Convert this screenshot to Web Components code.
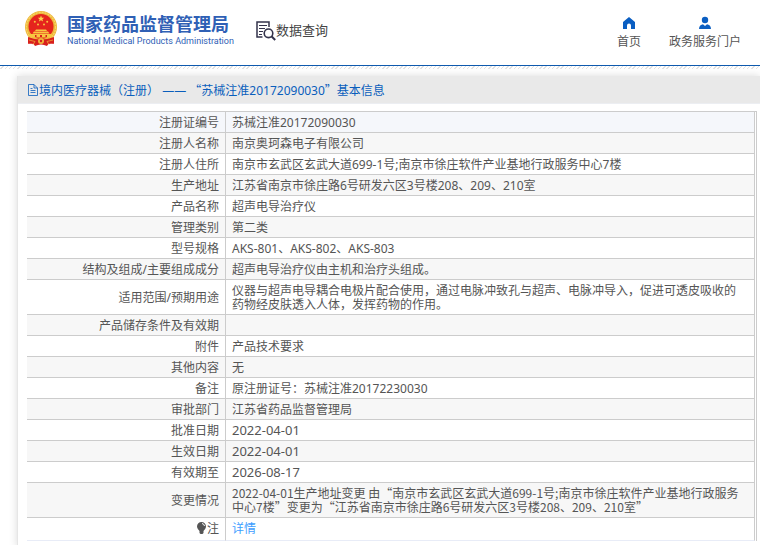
<!DOCTYPE html>
<html lang="zh-CN">
<head>
<meta charset="utf-8">
<title>数据查询</title>
<style>
  body {
    margin: 0;
    background: #fff;
    color: #555;
    font: 12px/14px "Noto Sans", "Noto Sans CJK SC", sans-serif;
  }
</style>
</head>
<body>
<data-page></data-page>

<script>
  function define(name, markup, setup) {
    const template = document.createElement('template');
    template.innerHTML = markup;
    customElements.define(name, class extends HTMLElement {
      constructor() {
        super();
        this.attachShadow({ mode: 'open' }).append(template.content.cloneNode(true));
        if (setup) setup(this.shadowRoot);
      }
    });
  }

  define('state-emblem', `
    <style>
      :host { display: block; width: 34px; }
      svg { display: block; width: 100%; }
    </style>
    <svg viewBox="0 0 34 36" aria-hidden="true">
      <path d="M6 26 L4 33 L9 32 L11 35 L17 33 L23 35 L25 32 L30 33 L28 26Z" fill="#d8201c"/>
      <circle cx="17" cy="16" r="16" fill="#edb73c"/>
      <circle cx="17" cy="16" r="14.600" fill="none" stroke="#f8d566" stroke-width="1.200" stroke-dasharray="2 1"/>
      <circle cx="17" cy="15.500" r="12.500" fill="#e5241d"/>
      <path d="M17 4.500l.9 2.200 2.400.1-1.900 1.500.7 2.300-2.100-1.300-2.100 1.300.7-2.300-1.900-1.500 2.400-.1z" fill="#fbd34c"/>
      <g fill="#f8c640">
        <circle cx="10.800" cy="10.800" r="1"/><circle cx="14" cy="13.500" r="1"/>
        <circle cx="20" cy="13.500" r="1"/><circle cx="23.200" cy="10.800" r="1"/>
        <path d="M12 18.500h10l1 1.500H11zM10 20.500h14l1.500 2h-17zM6 23h22v3.500H6z"/>
      </g>
      <path d="M16 24h2v2h-2zM11 24h1.500v2H11zM21.500 24H23v2h-1.500z" fill="#d8201c"/>
      <path d="M4 26q13 5 26 0v6q-13 3-26 0z" fill="#d8201c"/>
      <circle cx="17" cy="30" r="3" fill="#edb73c"/><circle cx="17" cy="30" r="1.200" fill="#d8201c"/>
      <path d="M5 29l6 1.500-2 3M29 29l-6 1.500 2 3" fill="none" stroke="#f3b63a" stroke-width=".7"/>
    </svg>`);

  define('brand-logo', `
    <style>
      :host { display: flex; align-items: center; gap: 9px; color: #2f60b5; }
      .text { padding-top: 4px; }
      .name { display: block; font-size: 18px; line-height: 20px; font-weight: 700; }
      .english { display: block; font: 9px/14px Roboto, sans-serif; }
    </style>
    <state-emblem></state-emblem>
    <div class="text">
      <span class="name"><slot></slot></span>
      <span class="english"><slot name="english"></slot></span>
    </div>`);

  define('query-title', `
    <style>
      :host { display: flex; align-items: center; color: #444; }
      svg { width: 20px; height: 20px; }
      span { font-size: 13px; line-height: 18px; padding-bottom: 2px; }
    </style>
    <svg viewBox="0 0 20 20" fill="none" stroke="#33334b" aria-hidden="true">
      <path d="M6.500 16H1V1h12v5" stroke-width="1.500"/>
      <path d="M3 4.500h8M3 7.500h6M3 10.500h4M3 13.500h3" stroke-width="1"/>
      <circle cx="12.500" cy="12.300" r="4.300" stroke-width="1.600"/>
      <path d="M15.700 15.500l3.500 3.500" stroke-width="2"/>
    </svg>
    <span><slot></slot></span>`);

  define('nav-item', `
    <style>
      :host { display: block; }
      a { display: flex; flex-direction: column; align-items: center; gap: 5px; color: #555; text-decoration: none; }
      ::slotted(svg) { display: block; width: 14px; height: 14px; fill: #0a5ec2; }
    </style>
    <a href="#"><slot name="icon"></slot><span><slot></slot></span></a>`);

  define('site-header', `
    <style>
      :host { display: block; }
      header { display: flex; align-items: center; height: 65px; padding: 0 19px 0 24px; border-bottom: 1px solid #0f5aae; }
      brand-logo { margin-top: -8px; }
      query-title { margin: -4px 0 0 22px; }
      nav { display: flex; gap: 28px; margin-left: auto; }
      .hatch { height: 3px; background: repeating-linear-gradient(135deg, #fff 0 2px, #e2e2e2 2px 3px); }
    </style>
    <header>
      <brand-logo>国家药品监督管理局<span slot="english">National Medical Products Administration</span></brand-logo>
      <query-title>数据查询</query-title>
      <nav>
        <nav-item><svg slot="icon" viewBox="0 0 14 14" aria-hidden="true"><path d="M7 1L1 6v7h4V9.500a2 2 0 0 1 4 0V13h4V6z"/></svg>首页</nav-item>
        <nav-item><svg slot="icon" viewBox="0 0 14 14" aria-hidden="true"><circle cx="7" cy="4" r="3.200"/><path d="M1 13c0-3 2-4.500 4-4.700L7 10l2-1.700c2 .2 4 1.700 4 4.700z"/></svg>政务服务门户</nav-item>
      </nav>
    </header>
    <div class="hatch"></div>`);

  define('info-card', `
    <style>
      :host { display: block; background: #fff; border-left: 1px solid #e6e6e6; box-shadow: 0 0 8px rgba(0,0,0,.15); }
      h1 { display: flex; align-items: center; height: 27px; margin: 0; padding: 0 9px; background: #e9e9e9; border-bottom: 1px solid #eceef2; color: #0a5ebc; font-size: 12px; font-weight: 400; }
      svg { flex: none; width: 12px; height: 12px; }
      .body { padding: 7px 3px 6px 9px; }
    </style>
    <h1>
      <svg viewBox="0 0 12 12" fill="none" stroke="currentColor" stroke-width=".8" aria-hidden="true"><path d="M1.500.5H7l3.500 3.500v7.500h-9zM7 .5V4h3.500M3.500 6.500h5M3.500 8.500h5M3.500 4.500h2"/></svg>
      <slot name="title"></slot>
    </h1>
    <div class="body"><slot></slot></div>`);

  const records = [
    ['注册证编号', '苏械注准20172090030'],
    ['注册人名称', '南京奥珂森电子有限公司'],
    ['注册人住所', '南京市玄武区玄武大道699-1号;南京市徐庄软件产业基地行政服务中心7楼'],
    ['生产地址', '江苏省南京市徐庄路6号研发六区3号楼208、209、210室'],
    ['产品名称', '超声电导治疗仪'],
    ['管理类别', '第二类'],
    ['型号规格', 'AKS-801、AKS-802、AKS-803'],
    ['结构及组成/主要组成成分', '超声电导治疗仪由主机和治疗头组成。'],
    ['适用范围/预期用途', '仪器与超声电导耦合电极片配合使用，通过电脉冲致孔与超声、电脉冲导入，促进可透皮吸收的药物经皮肤透入人体，发挥药物的作用。'],
    ['产品储存条件及有效期', ''],
    ['附件', '产品技术要求'],
    ['其他内容', '无'],
    ['备注', '原注册证号：苏械注准20172230030'],
    ['审批部门', '江苏省药品监督管理局'],
    ['批准日期', '2022-04-01', 'date'],
    ['生效日期', '2022-04-01', 'date'],
    ['有效期至', '2026-08-17', 'date'],
    ['变更情况', '2022-04-01生产地址变更 由“南京市玄武区玄武大道699-1号;南京市徐庄软件产业基地行政服务中心7楼”变更为“江苏省南京市徐庄路6号研发六区3号楼208、209、210室”', 'quoted']
  ];

  define('record-table', `
    <style>
      :host { display: block; border: 1px solid #ccc; border-width: 1px 1px 0 0; padding-right: 1px; }
      table { width: 100%; border-collapse: separate; border-spacing: 0; }
      th, td { height: 14px; border: 1px solid #ccc; border-width: 0 1px 1px 0; font-weight: 400; overflow-wrap: anywhere; }
      th { width: 192px; padding: 4px 6px 2px 0; text-align: right; }
      td { padding: 4px 8px 2px 6px; }
      tr:nth-child(even) { background: #f7f7f7; }
      tr:first-child { background: #f5f7fb; }
      .date { font-size: 13px; padding-top: 3px; padding-bottom: 3px; }
      .quoted { font-family: "Noto Sans CJK SC", sans-serif; padding-top: 3px; padding-bottom: 3px; }
      tr.note { background: #fff; }
      .note th, .note td { padding-top: 4px; padding-bottom: 4px; border-bottom-color: #e8ecf7; }
      a { color: #409eff; text-decoration: none; }
      svg { width: 11px; height: 12px; vertical-align: -1px; }
    </style>
    <table><tbody>
      <tr class="note">
        <th scope="row"><svg viewBox="0 0 11 12" aria-hidden="true"><path d="M5.500 0a4.500 4.500 0 0 1 4.500 4.500c0 2-1.500 3-2.500 4.500v2l-1 1h-2l-1-1V9C2.500 7.500 1 6.500 1 4.500A4.500 4.500 0 0 1 5.500 0z" fill="#555"/><path d="M6 1.500A3 3 0 0 1 8.500 4" fill="none" stroke="#fff"/></svg>注</th>
        <td><a href="#">详情</a></td>
      </tr>
    </tbody></table>`, root => {
      const note = root.querySelector('.note');
      for (const [label, value, kind] of records) {
        const row = document.createElement('tr');
        const head = document.createElement('th');
        const cell = document.createElement('td');
        head.scope = 'row';
        head.textContent = label;
        cell.textContent = value;
        if (kind) cell.className = kind;
        row.append(head, cell);
        note.before(row);
      }
    });

  define('data-page', `
    <style>
      :host { display: block; overflow: hidden; }
      info-card { margin: 7px 0 0 17px; }
      .title { padding-top: 2px; }
      .wide { font-family: "Noto Sans CJK TC", sans-serif; line-height: 0; }
    </style>
    <site-header></site-header>
    <main>
      <info-card>
        <span slot="title" class="title">境内医疗器械<span class="wide">（</span>注册<span class="wide">）</span> —— <span class="wide">“</span>苏械注准20172090030<span class="wide">”</span>基本信息</span>
        <record-table></record-table>
      </info-card>
    </main>`);
</script>
</body>
</html>
